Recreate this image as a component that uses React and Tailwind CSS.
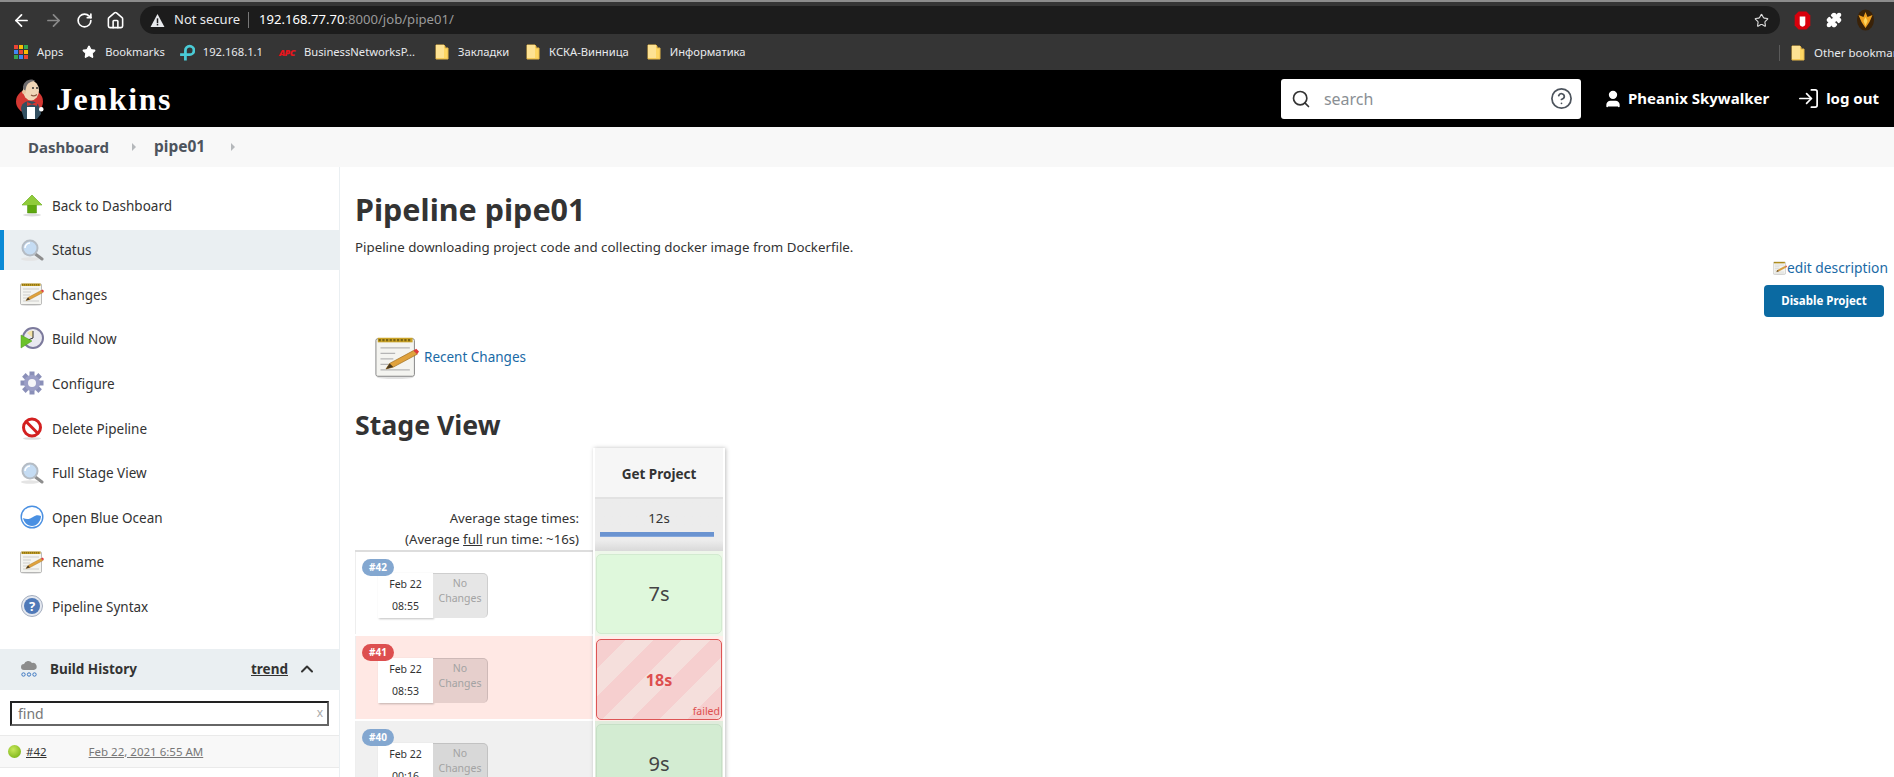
import { ArrowLeft, ArrowRight, RotateCw, Home, Star, ChevronUp, Search, CircleHelp, User, LogIn, Puzzle } from 'lucide-react';

function AppsIcon() {
  const colors = ['#ea4335', '#fbbc04', '#34a853', '#4285f4', '#ea4335', '#fbbc04', '#34a853', '#4285f4', '#ea4335'];
  return (
    <div className="grid grid-cols-3 gap-[1px] w-[14px] h-[14px]">
      {colors.map((c, i) => (
        <div key={i} style={{ backgroundColor: c }} />
      ))}
    </div>
  );
}

function FolderIcon() {
  return (
    <svg width="14" height="16" viewBox="0 0 14 16" className="shrink-0">
      <path d="M1 1h8l1 1v2h3v11H1z" fill="#fdd663" stroke="#e6b84a" />
      <path d="M1 1h8v13H1z" fill="#fde293" />
    </svg>
  );
}

function Bookmark({ icon, label, gap, className = '' }) {
  return (
    <div className={`flex items-center shrink-0 ${className}`}>
      {icon}
      <span className={`${gap} text-[11.200px] text-[#e8eaed]`}>{label}</span>
    </div>
  );
}

function BrowserChrome() {
  return (
    <div className="bg-[#353535]">
      <div className="h-[2px] bg-[#8c8c8c]" />
      <div className="h-[33px] flex items-center pt-[3px]">
        <div className="flex items-center w-[140px] shrink-0 text-white pl-[12px] gap-[13px]">
          <ArrowLeft size={19} strokeWidth={2.2} />
          <ArrowRight size={19} strokeWidth={2.2} className="text-[#8a8a8a]" />
          <RotateCw size={17} strokeWidth={2.4} />
          <Home size={19} strokeWidth={2} />
        </div>
        <div className="w-[1640px] h-[28px] rounded-full bg-[#1c1c1c] flex items-center pl-[10px] pr-[11px] shrink-0">
          <svg width="15" height="15" viewBox="0 0 14 14">
            <path d="M7 1l6.500 12H.5z" fill="#e8eaed" />
            <rect x="6.300" y="5" width="1.400" height="4.500" fill="#1c1c1c" />
            <rect x="6.300" y="10.200" width="1.400" height="1.400" fill="#1c1c1c" />
          </svg>
          <span className="ml-[9px] text-[13px] text-[#e8eaed]">Not secure</span>
          <div className="w-px h-[16px] bg-[#777] ml-[8px] mr-[10px]" />
          <span className="text-[13.100px] text-white">192.168.77.70<span className="text-[#9a9a9a]">:8000/job/pipe01/</span></span>
          <Star size={15} strokeWidth={1.8} className="ml-auto text-[#dcdcdc]" />
        </div>
        <div className="flex items-center ml-[14px]">
          <svg width="17" height="19" viewBox="0 0 15 17">
            <path d="M4 .5h7L14.500 4v9L11 16.500H4L.5 13V4z" fill="#d8000c" />
            <path d="M5 5h5v6.500a2.500 2.500 0 0 1-5 0z" fill="#fff" />
          </svg>
          <Puzzle size={16} fill="#fff" className="ml-[15px] text-white" />
          <svg width="21" height="22" viewBox="0 0 18 22" className="ml-[13px]">
            <ellipse cx="9" cy="11" rx="8.500" ry="10.500" fill="#3a2208" />
            <path d="M9 3l2 5 5-2-3 7-4 6-4-6-3-7 5 2z" fill="#f0a020" />
            <path d="M9 8l2 4-2 5-2-5z" fill="#ffd75e" />
          </svg>
        </div>
      </div>
      <div className="h-[35px] flex items-center pl-[14px] overflow-hidden">
        <Bookmark icon={<AppsIcon />} gap="ml-[9px]" label="Apps" />
        <Bookmark className="ml-[19px]" gap="ml-[9px]" icon={<Star size={14} fill="#fff" className="text-white" />} label="Bookmarks" />
        <Bookmark
          className="ml-[14px]"
          gap="ml-[8px]"
          icon={
            <svg width="16" height="17" viewBox="0 0 15 16" fill="none" stroke="#4acbd6" strokeWidth="2.600">
              <path d="M6 15.500V6a4 4 0 1 1 4 4H1" />
            </svg>
          }
          label="192.168.1.1"
        />
        <Bookmark
          className="ml-[16px]"
          gap="ml-[4px]"
          icon={<span className="text-[#e8141c] text-[9px] font-black italic tracking-tighter w-[21px]">APC</span>}
          label="BusinessNetworksP..."
        />
        <Bookmark className="ml-[20px]" gap="ml-[9px]" icon={<FolderIcon />} label="Закладки" />
        <Bookmark className="ml-[17px]" gap="ml-[9px]" icon={<FolderIcon />} label="КСКА-Винница" />
        <Bookmark className="ml-[18px]" gap="ml-[9px]" icon={<FolderIcon />} label="Информатика" />
        <div className="ml-auto flex items-center shrink-0 w-[115px] border-l border-[#5a5a5a] pl-[11px] h-[16px] gap-[9px] overflow-hidden">
          <FolderIcon />
          <span className="text-[11.500px] text-[#e8eaed] whitespace-nowrap">Other bookmarks</span>
        </div>
      </div>
    </div>
  );
}

function JenkinsLogo() {
  return (
    <svg width="30" height="40" viewBox="0 0 30 40">
      <ellipse cx="13.500" cy="22.500" rx="13.500" ry="12.500" fill="#d33833" />
      <path d="M5 30c0-5 4-8 9-8s9 3 10 8l1 5-4 5H8z" fill="#335061" />
      <ellipse cx="15" cy="11.500" rx="8" ry="10" fill="#f0d6b7" />
      <path d="M7 9c0-5 4-8.500 8-8.500 2 0 3 .5 4 1.500-4 0-8 2-9 7l-1 4z" fill="#6d6b6d" />
      <circle cx="8" cy="13" r="2" fill="#e8c6a0" />
      <circle cx="17" cy="9" r="1" fill="#333" />
      <circle cx="21" cy="9" r="1" fill="#333" />
      <path d="M15 16c2 1.500 4 1 6-.5" fill="none" stroke="#8a5a44" strokeWidth="1.200" />
      <path d="M11 23l5 2 5-2v4l-5-1.500L11 27z" fill="#d33833" />
      <rect x="11" y="28" width="8" height="12" fill="#fff" />
      <rect x="23" y="28" width="4.500" height="4.500" rx="2" fill="#fff" />
    </svg>
  );
}

function Header() {
  return (
    <div className="h-[57px] bg-black flex items-center pl-[16px] pr-[15px] text-white">
      <JenkinsLogo />
      <span className="ml-[10px] text-[32px] font-bold font-['Liberation_Serif',serif] leading-none tracking-[1.600px]">Jenkins</span>
      <div className="ml-auto w-[300px] h-[40px] rounded-[3px] bg-white flex items-center pl-[10px] pr-[8px]">
        <Search size={20} strokeWidth={2} className="text-[#333]" />
        <span className="ml-[13px] text-[16px] text-[#8a8f94]">search</span>
        <CircleHelp size={23} strokeWidth={1.8} className="ml-auto text-[#4d545d]" />
      </div>
      <User size={20} fill="#fff" className="ml-[22px]" />
      <span className="ml-[5px] text-[15px] font-bold">Pheanix Skywalker</span>
      <LogIn size={23} strokeWidth={1.8} className="ml-[28px]" />
      <span className="ml-[6px] text-[15px] font-bold">log out</span>
    </div>
  );
}

function Breadcrumb() {
  return (
    <div className="h-[40px] bg-[#f8f8f8] flex items-center pl-[28px] text-[#4d545d] text-[15px] font-bold">
      <span>Dashboard</span>
      <div className="ml-[23px] w-0 h-0 border-y-[4px] border-y-transparent border-l-[4px] border-l-[#b5b8bb]" />
      <span className="ml-[18px] text-[15.500px]">pipe01</span>
      <div className="ml-[26px] w-0 h-0 border-y-[4px] border-y-transparent border-l-[4px] border-l-[#b5b8bb]" />
    </div>
  );
}

function ArrowUpIcon() {
  return (
    <svg width="24" height="24" viewBox="0 0 24 24">
      <ellipse cx="12" cy="22" rx="9" ry="1.500" fill="#ddd" />
      <path d="M12 2l10 10h-5.500v8h-9v-8H2z" fill="#5ea80f" stroke="#4a8f0a" strokeWidth="0.500" />
      <path d="M12 2l10 10H2z" fill="#8fcb3a" />
    </svg>
  );
}

function MagnifierIcon() {
  return (
    <svg width="24" height="24" viewBox="0 0 24 24">
      <ellipse cx="10" cy="21" rx="9" ry="1.800" fill="#e4e4e4" />
      <line x1="14" y1="15" x2="22" y2="21" stroke="#8e8e8e" strokeWidth="3" strokeLinecap="round" />
      <circle cx="10" cy="10" r="7.500" fill="#c5dcf3" stroke="#b5bcc4" strokeWidth="2" />
      <path d="M5 10a5 5 0 0 1 5-5" fill="none" stroke="#fff" strokeWidth="1.500" />
    </svg>
  );
}

function NotepadIcon({ size = 24 }) {
  return (
    <svg width={size} height={size} viewBox="0 0 24 24">
      <ellipse cx="11" cy="23" rx="10" ry="1" fill="#e2e2e2" />
      <rect x="0.500" y="2" width="21" height="20.500" rx="1" fill="#f4f4f0" stroke="#7f7f7f" strokeWidth="0.500" />
      <rect x="1.500" y="1.500" width="19" height="2.500" fill="#c9a227" />
      <path d="M2 2.800h18" stroke="#7a6412" strokeWidth="1.200" strokeDasharray="1.200 0.800" />
      <path d="M3 7h16M3 10h8M3 13h7M3 16h5M3 19h16" stroke="#b5b5b5" strokeWidth="0.600" />
      <path d="M6 18.500l2-3L21 8.500l2 2L10 17.500z" fill="#e0a23c" stroke="#a06f20" strokeWidth="0.400" />
      <path d="M21 8.500l2 2 1-1.500-1.500-1.500z" fill="#e03a3a" />
      <path d="M6 18.500l2-3 2 2z" fill="#4a3a20" />
    </svg>
  );
}

function ClockIcon() {
  return (
    <svg width="24" height="24" viewBox="0 0 24 24">
      <circle cx="13" cy="11" r="10" fill="#e9e9f0" stroke="#7c7a9c" strokeWidth="2" />
      <path d="M13 11V3.500A7.500 7.500 0 0 0 7 6z" fill="#f3e3a8" />
      <path d="M13 4v7l-5 2" fill="none" stroke="#333" strokeWidth="1" />
      <path d="M1 8l11 6-11 7z" fill="#6cc22c" stroke="#4e9a1a" strokeWidth="0.500" />
    </svg>
  );
}

function GearIcon() {
  const teeth = [0, 45, 90, 135, 180, 225, 270, 315];
  return (
    <svg width="24" height="24" viewBox="0 0 24 24">
      {teeth.map((a) => (
        <rect key={a} x="9.500" y="0.500" width="5" height="5" fill="#8a8fb8" transform={`rotate(${a} 12 12)`} />
      ))}
      <circle cx="12" cy="12" r="8" fill="#9b9ec6" />
      <circle cx="12" cy="12" r="4" fill="#f5f5f8" />
    </svg>
  );
}

function DeleteIcon() {
  return (
    <svg width="24" height="24" viewBox="0 0 24 24">
      <ellipse cx="12" cy="22.500" rx="9" ry="1.300" fill="#ddd" />
      <circle cx="12" cy="11.500" r="8.500" fill="#fff" stroke="#d32020" strokeWidth="3" />
      <line x1="6" y1="5.500" x2="18" y2="17.500" stroke="#d32020" strokeWidth="3" />
    </svg>
  );
}

function OceanIcon() {
  return (
    <svg width="24" height="24" viewBox="0 0 24 24">
      <circle cx="12" cy="12" r="10.800" fill="#fff" stroke="#4a90e2" strokeWidth="1.400" />
      <path d="M3 13c4 2 7 1 10-1s5-2 8-1c0 5-4 10-9 10s-8-4-9-8z" fill="#4a90e2" />
    </svg>
  );
}

function HelpIcon() {
  return (
    <svg width="24" height="24" viewBox="0 0 24 24">
      <circle cx="12" cy="12" r="10.500" fill="#e4e8f0" stroke="#a4aebf" strokeWidth="1" />
      <circle cx="12" cy="12" r="8" fill="#4f79b8" />
      <text x="12" y="16.500" textAnchor="middle" fontSize="13" fontWeight="700" fill="#fff">?</text>
    </svg>
  );
}

function CloudIcon() {
  return (
    <svg width="18" height="18" viewBox="0 0 18 18">
      <path d="M4 10a3 3 0 0 1 0-6 4.500 4.500 0 0 1 8-1 3.500 3.500 0 0 1 2 7z" fill="#8c8c8c" />
      <circle cx="3.500" cy="14.500" r="1.700" fill="none" stroke="#3d78c2" strokeWidth="1" />
      <circle cx="9" cy="14.500" r="1.700" fill="none" stroke="#3d78c2" strokeWidth="1" />
      <circle cx="14.500" cy="14.500" r="1.700" fill="none" stroke="#3d78c2" strokeWidth="1" />
    </svg>
  );
}

const tasks = [
  { label: 'Back to Dashboard', icon: <ArrowUpIcon /> },
  { label: 'Status', icon: <MagnifierIcon />, active: true },
  { label: 'Changes', icon: <NotepadIcon /> },
  { label: 'Build Now', icon: <ClockIcon /> },
  { label: 'Configure', icon: <GearIcon /> },
  { label: 'Delete Pipeline', icon: <DeleteIcon /> },
  { label: 'Full Stage View', icon: <MagnifierIcon /> },
  { label: 'Open Blue Ocean', icon: <OceanIcon /> },
  { label: 'Rename', icon: <NotepadIcon /> },
  { label: 'Pipeline Syntax', icon: <HelpIcon /> },
];

function Sidebar() {
  return (
    <div className="w-[340px] shrink-0 border-r border-[#eaeff2] pt-[18px]">
      {tasks.map((t) => (
        <div
          key={t.label}
          className={`h-[40px] mb-[4.600px] flex items-center text-[13.500px] text-[#333] ${
            t.active ? 'bg-[#eaeff2] border-l-[4px] border-[#0b8ad6] pl-[16px]' : 'pl-[20px]'
          }`}
        >
          {t.icon}
          <span className="ml-[8px] mt-[1.500px]">{t.label}</span>
        </div>
      ))}
      <div className="mt-[22.600px] h-[41px] bg-[#eaeff2] flex items-center pl-[20px] pr-[22px] text-[#333]">
        <CloudIcon />
        <span className="ml-[12px] text-[13.500px] font-bold">Build History</span>
        <span className="ml-auto text-[13.500px] font-bold underline">trend</span>
        <ChevronUp size={20} strokeWidth={2.4} className="ml-[9px]" />
      </div>
      <div className="h-[46px] pt-[11px] px-[10px] border-b border-[#eaeaea]">
        <div className="h-[25px] border-2 border-t-[#222] border-l-[#222] border-r-[#666] border-b-[#666] flex items-center justify-between pl-[6px] pr-[4px]">
          <span className="text-[14px] text-[#777]">find</span>
          <span className="text-[12px] text-[#aaa]">x</span>
        </div>
      </div>
      <div className="h-[32px] bg-[#f8f8f8] border-b border-[#eaeaea] flex items-center pl-[8px] text-[11.500px]">
        <span className="w-[13px] h-[13px] rounded-full bg-[radial-gradient(circle_at_40%_35%,#c8e85a,#6aa80a)]" />
        <span className="ml-[5px] underline text-[#333]">#42</span>
        <span className="ml-[42px] underline text-[#777]">Feb 22, 2021 6:55 AM</span>
      </div>
    </div>
  );
}

function BuildRow({ id, time, badge, rowBg, changesBg, rowClass }) {
  return (
    <div className={`${rowClass} ${rowBg} pl-[6px] border-x border-[#eeeeee]`}>
      <div className={`w-[32px] text-center ${badge} rounded-full text-white text-[10px] font-bold h-[17px] leading-[17px] relative z-10`}>
        #{id}
      </div>
      <div className="flex ml-[16px] -mt-[3px] h-[45px]">
        <div className="w-[55px] bg-white shadow-[1px_1px_2px_rgba(0,0,0,0.25)] flex flex-col items-center justify-between pt-[4px] pb-[3px] text-[10.500px] text-[#333]">
          <span>Feb 22</span>
          <span>{time}</span>
        </div>
        <div className={`w-[55px] ${changesBg} border-t border-r border-black/10 rounded-r-[5px] flex flex-col items-center pt-[2px] text-[10.500px] leading-[15px] text-[#a3a3a3]`}>
          <span>No</span>
          <span>Changes</span>
        </div>
      </div>
    </div>
  );
}

function StageView() {
  return (
    <div className="flex items-start mt-[5px]">
      <div className="w-[238px] shrink-0 pt-[51px]">
        <div className="h-[51px] text-right pr-[14px] text-[13.200px] leading-[21px] text-[#333] pt-[9px]">
          <div>Average stage times:</div>
          <div>
            (Average <span className="underline">full</span> run time: ~16s)
          </div>
        </div>
        <div className="h-[2px] bg-[#ddd]" />
        <BuildRow id="42" time="08:55" badge="bg-[#83a7d0]" rowBg="bg-white" changesBg="bg-[#e6e6e6]" rowClass="h-[82px] mb-[2px] pt-[7px]" />
        <BuildRow id="41" time="08:53" badge="bg-[#dd4f4f]" rowBg="bg-[#ffe8e4]" changesBg="bg-[#e6cfcc]" rowClass="h-[83px] mb-[2px] pt-[8px]" />
        <BuildRow id="40" time="00:16" badge="bg-[#83a7d0]" rowBg="bg-[#f0f0f0]" changesBg="bg-[#d8d8d8]" rowClass="h-[60px] pt-[8px]" />
      </div>
      <div className="w-[132px] shrink-0 shadow-[1px_0_4px_rgba(0,0,0,0.25)] px-[2px]">
        <div className="h-[51px] pt-[3px] bg-[#f6f6f6] border-b-2 border-[#e2e2e2] flex items-center justify-center text-[13.500px] font-bold text-[#333]">
          Get Project
        </div>
        <div className="h-[52px] bg-gradient-to-b from-[#ececec] from-80% to-[#d9d9d9] px-[5px] pt-[10px] text-center text-[13.200px] leading-[18px] text-[#333]">
          12s
          <div className="h-[5px] mt-[5px] bg-[#6a93d0] border-b border-[#86a8dc] mr-[4px]" />
        </div>
        <div className="bg-[#eef7ea] h-[85px] px-[1px] pt-[3px]">
          <div className="h-[80px] rounded-[5px] bg-[#dff8dc] border border-[#d2ead0] flex items-center justify-center text-[20px] text-[#444]">7s</div>
        </div>
        <div className="bg-[#ffeeea] h-[85px] px-[1px] pt-[3px]">
          <div className="relative h-[81px] rounded-[5px] border-[1.500px] border-[#dd5555] bg-[repeating-linear-gradient(135deg,#f6cfcf_0,#f6cfcf_20px,#f5dfdc_20px,#f5dfdc_40px)] flex items-center justify-center text-[16px] font-bold text-[#dd4f4f]">
            18s
            <span className="absolute right-[1px] bottom-[1px] text-[10.500px] leading-[14px] font-normal text-[#dd4f4f]">failed</span>
          </div>
        </div>
        <div className="bg-[#e0ecdc] h-[60px] px-[1px] pt-[3px]">
          <div className="h-[80px] rounded-[5px] bg-[#d3ecd2] border border-[#c6dfc6] flex items-center justify-center text-[20px] text-[#444]">9s</div>
        </div>
      </div>
    </div>
  );
}

function MainPanel() {
  return (
    <div className="flex-1 min-w-0 pl-[15px] pr-[6px]">
      <h1 className="text-[30.500px] leading-[44px] font-bold text-[#333] mt-[20px]">Pipeline pipe01</h1>
      <p className="text-[13.300px] leading-[20px] text-[#333] mt-[6px]">Pipeline downloading project code and collecting docker image from Dockerfile.</p>
      <div className="flex flex-col items-end">
        <div className="flex items-center mt-[3px] text-[13.800px] leading-[16px] text-[#1a6aa6]">
          <NotepadIcon size={14} />
          <span>edit description</span>
        </div>
        <div className="mt-[9px] mr-[4px] w-[120px] h-[32px] rounded-[4px] bg-[#0b6aa2] flex items-center justify-center text-[11.500px] font-bold text-white">Disable Project</div>
      </div>
      <div className="flex items-center ml-[20px] mt-[18px]">
        <NotepadIcon size={44} />
        <span className="ml-[5px] text-[13.500px] text-[#1a6aa6]">Recent Changes</span>
      </div>
      <h2 className="text-[26.700px] leading-[36px] font-bold text-[#333] mt-[28px]">Stage View</h2>
      <StageView />
    </div>
  );
}

export default function App() {
  return (
    <div className="w-[1894px] h-[777px] overflow-hidden bg-white font-['Noto_Sans',sans-serif] flex flex-col">
      <BrowserChrome />
      <Header />
      <Breadcrumb />
      <div className="flex flex-1 min-h-0">
        <Sidebar />
        <MainPanel />
      </div>
    </div>
  );
}
